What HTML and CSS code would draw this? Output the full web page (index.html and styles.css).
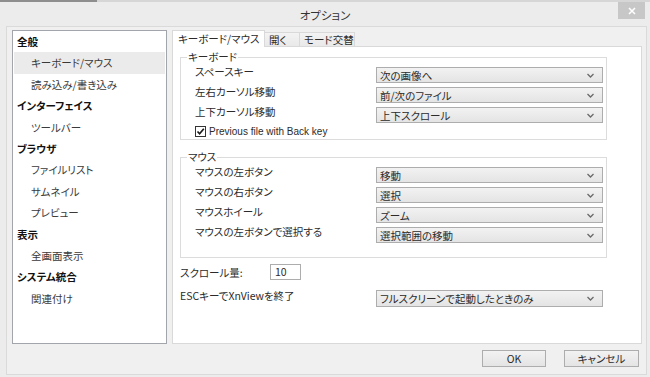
FILE: index.html
```html
<!DOCTYPE html>
<html lang="ja">
<head>
  <meta charset="UTF-8">
  <title>オプション</title>
  <link rel="stylesheet" href="styles.css">
</head>
<body>
  <div class="window">
    <div class="topline"><span class="topline-dark"></span></div>
    <div class="titlebar">
      <span></span>
      <span class="title">オプション</span>
      <span class="close">
        <svg width="8" height="8" viewBox="0 0 8 8"><path d="M1 1L7 7M7 1L1 7" stroke="#fff" stroke-width="1.6"/></svg>
      </span>
    </div>
    <div class="client">
      <div class="main">
        <ul class="tree">
          <li class="node head">全般</li>
          <li class="node selected">キーボード/マウス</li>
          <li class="node">読み込み/書き込み</li>
          <li class="node head">インターフェイス</li>
          <li class="node">ツールバー</li>
          <li class="node head">ブラウザ</li>
          <li class="node">ファイルリスト</li>
          <li class="node">サムネイル</li>
          <li class="node">プレビュー</li>
          <li class="node head">表示</li>
          <li class="node">全画面表示</li>
          <li class="node head">システム統合</li>
          <li class="node">関連付け</li>
        </ul>
        <div class="tabs-wrap">
          <div class="tabs">
            <span class="tab active">キーボード/マウス</span>
            <span class="tab tab-open">開く</span>
            <span class="tab tab-mode">モード交替</span>
          </div>
          <div class="tab-panel">
            <fieldset class="group-box">
              <legend>キーボード</legend>
              <div class="row"><span class="label">スペースキー</span><div class="select">次の画像へ<svg width="7" height="5" viewBox="0 0 7 5"><path d="M0.5 1L3.5 4L6.5 1" fill="none" stroke="#6b6b6b" stroke-width="1.3"/></svg></div></div>
              <div class="row"><span class="label">左右カーソル移動</span><div class="select">前/次のファイル<svg width="7" height="5" viewBox="0 0 7 5"><path d="M0.5 1L3.5 4L6.5 1" fill="none" stroke="#6b6b6b" stroke-width="1.3"/></svg></div></div>
              <div class="row"><span class="label">上下カーソル移動</span><div class="select">上下スクロール<svg width="7" height="5" viewBox="0 0 7 5"><path d="M0.5 1L3.5 4L6.5 1" fill="none" stroke="#6b6b6b" stroke-width="1.3"/></svg></div></div>
              <div class="check-row">
                <span class="checkbox"><svg width="9" height="9" viewBox="0 0 9 9"><path d="M1.5 4.5L3.6 6.8L7.8 1.8" fill="none" stroke="#1a1a1a" stroke-width="1.7"/></svg></span>
                <span class="check-text">Previous file with Back key</span>
              </div>
            </fieldset>
            <fieldset class="group-box mouse">
              <legend>マウス</legend>
              <div class="row"><span class="label">マウスの左ボタン</span><div class="select">移動<svg width="7" height="5" viewBox="0 0 7 5"><path d="M0.5 1L3.5 4L6.5 1" fill="none" stroke="#6b6b6b" stroke-width="1.3"/></svg></div></div>
              <div class="row"><span class="label">マウスの右ボタン</span><div class="select">選択<svg width="7" height="5" viewBox="0 0 7 5"><path d="M0.5 1L3.5 4L6.5 1" fill="none" stroke="#6b6b6b" stroke-width="1.3"/></svg></div></div>
              <div class="row"><span class="label">マウスホイール</span><div class="select">ズーム<svg width="7" height="5" viewBox="0 0 7 5"><path d="M0.5 1L3.5 4L6.5 1" fill="none" stroke="#6b6b6b" stroke-width="1.3"/></svg></div></div>
              <div class="row"><span class="label">マウスの左ボタンで選択する</span><div class="select">選択範囲の移動<svg width="7" height="5" viewBox="0 0 7 5"><path d="M0.5 1L3.5 4L6.5 1" fill="none" stroke="#6b6b6b" stroke-width="1.3"/></svg></div></div>
            </fieldset>
            <div class="scroll-row">
              <span class="scroll-label">スクロール量:</span>
              <span class="spin">10</span>
            </div>
            <div class="esc-row">
              <span class="label">ESCキーでXnViewを終了</span>
              <div class="select tall">フルスクリーンで起動したときのみ<svg width="7" height="5" viewBox="0 0 7 5"><path d="M0.5 1L3.5 4L6.5 1" fill="none" stroke="#6b6b6b" stroke-width="1.3"/></svg></div>
            </div>
          </div>
        </div>
      </div>
      <div class="buttons">
        <button class="btn ok">OK</button>
        <button class="btn cancel">キャンセル</button>
      </div>
    </div>
  </div>
</body>
</html>
```

FILE: styles.css
```css
*{
  margin: 0;
  padding: 0;
  box-sizing: border-box;
}
html,body{
  width: 650px;
  height: 377px;
  overflow: hidden;
  background: #ececec;
}
body{
  color: #2b2b2b;
  font-family: "Noto Sans CJK JP", sans-serif;
  font-size: 10.5px;
  line-height: 13px;
  font-feature-settings: "palt";
}
.window{
  width: 650px;
  height: 377px;
  display: flex;
  flex-direction: column;
}
.topline{
  height: 2px;
  background: #d6d6d6;
  display: flex;
}
.topline-dark{
  width: 97px;
  background: #8e8e8e;
}
.titlebar{
  height: 24px;
  display: grid;
  grid-template-columns: 1fr auto 1fr;
  align-items: start;
}
.title{
  font-size: 11.5px;
  line-height: 14px;
  margin-top: 6px;
  color: #333;
}
.close{
  justify-self: end;
  width: 27px;
  height: 17px;
  margin-right: 5px;
  background: #c7c7c7;
  display: flex;
  align-items: center;
  justify-content: center;
}
.client{
  height: 349px;
  margin: 0 3px 0 6px;
  border: 1px solid #dadada;
  background: #f0f0f0;
  padding: 3px 4px 0 5px;
  display: flex;
  flex-direction: column;
}
.main{
  height: 314px;
  display: flex;
  gap: 5px;
}

/* left tree */
.tree{
  width: 155px;
  height: 314px;
  list-style: none;
  background: #fff;
  border: 1px solid #a2a5ab;
}
.node{
  height: 21.4px;
  line-height: 21.4px;
  padding-left: 18px;
  color: #3a3a3a;
}
.node.head{
  padding-left: 4px;
  font-weight: bold;
  color: #111;
}
.node.selected{
  margin: 0 1px;
  padding-left: 17px;
  background: #ebebeb;
}

/* tabs */
.tabs-wrap{
  width: 470px;
  display: flex;
  flex-direction: column;
}
.tabs{
  height: 16px;
  display: flex;
  align-items: flex-end;
}
.tab{
  height: 14px;
  line-height: 13px;
  padding-left: 4px;
  border: 1px solid #d9d9d9;
  border-bottom: none;
  border-left: none;
  background: linear-gradient(#f3f3f3, #e9e9e9);
  white-space: nowrap;
}
.tab.active{
  width: 93px;
  height: 17px;
  margin-bottom: -1px;
  line-height: 15px;
  padding-left: 5px;
  border-left: 1px solid #d9d9d9;
  background: #fff;
  position: relative;
  z-index: 1;
}
.tab-open{
  width: 35px;
}
.tab-mode{
  width: 55px;
}
.tab-panel{
  flex: 1;
  background: #fff;
  border: 1px solid #d9d9d9;
  padding: 3px 0 0 7px;
}

/* group boxes */
.group-box{
  width: 427px;
  border: 1px solid #dcdcdc;
  padding: 0 3px 1px 6px;
}
.group-box legend{
  padding: 0 1px;
  line-height: 14px;
}
.group-box.mouse{
  margin-top: 10px;
  padding-bottom: 13px;
}
.row{
  height: 20px;
  padding-left: 8px;
  display: grid;
  grid-template-columns: 1fr 227px;
}
.label{
  padding-top: 1px;
}
.select{
  height: 16px;
  margin-top: 3px;
  padding: 0 8px 0 3px;
  border: 1px solid #adadad;
  background: linear-gradient(#f2f2f2, #e4e4e4);
  display: flex;
  align-items: center;
  justify-content: space-between;
}
.select.tall{
  height: 17px;
  margin-top: 4px;
}
.check-row{
  height: 14px;
  padding-left: 8px;
  display: flex;
  align-items: center;
}
.checkbox{
  width: 11px;
  height: 11px;
  border: 1px solid #333;
  background: #fff;
  display: flex;
  align-items: center;
  justify-content: center;
}
.check-text{
  margin-left: 3px;
  font-family: "Liberation Sans", sans-serif;
  font-size: 10px;
}
.scroll-row{
  margin-top: 6px;
  height: 16px;
  display: flex;
  align-items: center;
}
.scroll-label{
  width: 90px;
}
.spin{
  width: 31px;
  height: 16px;
  border: 1px solid #adadad;
  padding-left: 4px;
  line-height: 14px;
  background: #fff;
}
.esc-row{
  margin-top: 6px;
  display: grid;
  grid-template-columns: 196px 227px;
}
.esc-row .label{
  padding-top: 3px;
}

/* buttons */
.buttons{
  margin-top: 6px;
  padding-right: 3px;
  display: flex;
  justify-content: flex-end;
  gap: 18px;
}
.btn{
  height: 17px;
  border: 1px solid #adadad;
  background: linear-gradient(#f2f2f2, #e4e4e4);
  font-family: "Noto Sans CJK JP", sans-serif;
  font-size: 10.5px;
  line-height: 14px;
  font-feature-settings: "palt";
  color: #2b2b2b;
}
.btn.ok{
  width: 64px;
}
.btn.cancel{
  width: 75px;
}
```
